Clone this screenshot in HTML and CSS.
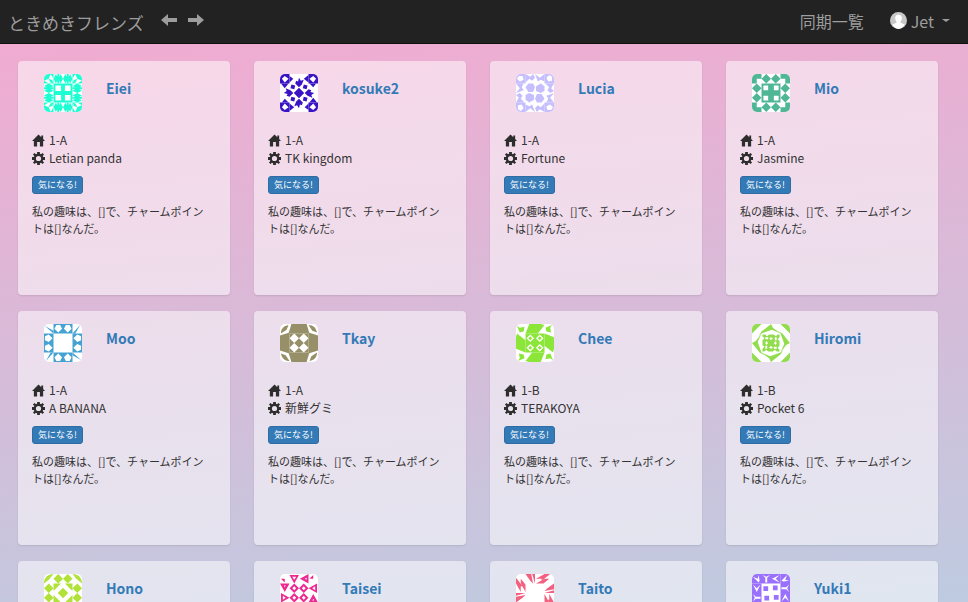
FILE: index.html
```html
<!DOCTYPE html>
<html lang="ja">
<head>
<meta charset="utf-8">
<meta name="viewport" content="width=device-width, initial-scale=1">
<title>ときめきフレンズ</title>
<link rel="stylesheet" href="styles.css">
</head>
<body>
<svg class="sprite" aria-hidden="true">
  <symbol id="home" viewBox="0 0 14 13"><path d="M7 0 0 7h2v6h3.500V8h3v5H12V7h2l-2-2V1h-2v2z"/></symbol>
  <symbol id="cog" viewBox="0 0 14 14"><path fill-rule="evenodd" d="M5.500 0h3v2l1.300.5L11.200 1 13 2.800 11.500 4.200l.5 1.300h2v3h-2l-.5 1.300 1.500 1.400-1.800 1.800-1.400-1.500-1.300.5v2h-3v-2l-1.300-.5L2.800 13 1 11.200l1.500-1.400L2 8.500H0v-3h2l.5-1.300L1 2.800 2.800 1l1.400 1.500L5.500 2zM7 4.200a2.800 2.800 0 1 0 0 5.600 2.800 2.800 0 0 0 0-5.600z"/></symbol>
  <symbol id="arrow" viewBox="0 0 16 14"><path d="M0 7 7 1v4h9v4H7v4z"/></symbol>
</svg>

<header class="navbar">
  <a class="brand" href="#">ときめきフレンズ</a>
  <nav class="history">
    <a href="#" aria-label="戻る"><svg class="arrow"><use href="#arrow"/></svg></a>
    <a href="#" aria-label="進む"><svg class="arrow arrow-next"><use href="#arrow"/></svg></a>
  </nav>
  <nav class="account">
    <a href="#">同期一覧</a>
    <a class="user" href="#">
      <svg class="face" viewBox="0 0 18 18"><circle cx="9" cy="9" r="9" fill="#c8c8c8"/><path fill="#fff" d="M9 3c2.500 0 3.700 1.700 3.500 4-.1 1.500-.7 2.500-1.300 3.200v1.300l4.300 1.800A9 9 0 0 1 9 18a9 9 0 0 1-6.500-4.700l4.300-1.800v-1.300C6.200 9.500 5.600 8.500 5.500 7 5.300 4.700 6.500 3 9 3z"/></svg>
      <span>Jet</span><span class="caret"></span>
    </a>
  </nav>
</header>

<main class="cards">
  <article class="card">
    <header class="card-head">
      <svg class="avatar" viewBox="0 0 40 40" fill="#1dffd2"><g id="a1"><path fill-rule="evenodd" d="M0 0H10V10H0zM7 0 5 5l2 5 3-5zM0 7l5-2 5 2-5 3z"/><path d="M12.500 0 15 5l-2.500 5L10 5zM17.500 0 20 5l-2.500 5L15 5zM22.500 0 25 5l-2.500 5L20 5zM27.500 0 30 5l-2.500 5L25 5zM14 0h2v10h-2zM24 0h2v10h-2z"/><path fill-rule="evenodd" d="M10 10H20V20H10zM12 12v6h6v-6z"/></g><use href="#a1" transform="rotate(90 20 20)"/><use href="#a1" transform="rotate(180 20 20)"/><use href="#a1" transform="rotate(270 20 20)"/></svg>
      <h2><a href="#">Eiei</a></h2>
    </header>
    <ul class="facts"><li><svg><use href="#home"/></svg>1-A</li><li><svg><use href="#cog"/></svg>Letian panda</li></ul>
    <button class="like" type="button">気になる!</button>
    <p>私の趣味は、[]で、チャームポイントは[]なんだ。</p>
  </article>

  <article class="card">
    <header class="card-head">
      <svg class="avatar" viewBox="0 0 40 40" fill="#3a14c4"><g id="a2"><path fill-rule="evenodd" d="M0 0H10V10H0zM5 2 2 5l3 4 4-4z"/><path d="M10 2l4 3-4 4zM30 1v8l-5-4zM20 4l2 3 3-1-2 5-3 3-4-4 1-3 2 1zM12 11l4 1-1 4-4-1zM20 15l5 5-5 5-5-5z"/></g><use href="#a2" transform="rotate(90 20 20)"/><use href="#a2" transform="rotate(180 20 20)"/><use href="#a2" transform="rotate(270 20 20)"/></svg>
      <h2><a href="#">kosuke2</a></h2>
    </header>
    <ul class="facts"><li><svg><use href="#home"/></svg>1-A</li><li><svg><use href="#cog"/></svg>TK kingdom</li></ul>
    <button class="like" type="button">気になる!</button>
    <p>私の趣味は、[]で、チャームポイントは[]なんだ。</p>
  </article>

  <article class="card">
    <header class="card-head">
      <svg class="avatar" viewBox="0 0 40 40" fill="#c6bfff"><g id="a3"><path fill-rule="evenodd" d="M0 0H10V10H0zM3 2 1 5l3 3 4-2-1-4z"/><path d="M10 0l5 3 3-3 2 4-3 3-3-2-4 4zM20 0l5 4 5-4v8l-4-2-3 2zM13 10h5l2 4-2 5h-5l-3-5z"/></g><use href="#a3" transform="rotate(90 20 20)"/><use href="#a3" transform="rotate(180 20 20)"/><use href="#a3" transform="rotate(270 20 20)"/></svg>
      <h2><a href="#">Lucia</a></h2>
    </header>
    <ul class="facts"><li><svg><use href="#home"/></svg>1-A</li><li><svg><use href="#cog"/></svg>Fortune</li></ul>
    <button class="like" type="button">気になる!</button>
    <p>私の趣味は、[]で、チャームポイントは[]なんだ。</p>
  </article>

  <article class="card">
    <header class="card-head">
      <svg class="avatar" viewBox="0 0 40 40" fill="#4fb795"><g id="a4"><path d="M0 0H10V5H5V10H0zM15 0l5 5-5 5-5-5zM25 0l5 5-5 5-5-5z"/><path fill-rule="evenodd" d="M10 10H20V20H10zM12 12v5h5v-5z"/></g><use href="#a4" transform="rotate(90 20 20)"/><use href="#a4" transform="rotate(180 20 20)"/><use href="#a4" transform="rotate(270 20 20)"/></svg>
      <h2><a href="#">Mio</a></h2>
    </header>
    <ul class="facts"><li><svg><use href="#home"/></svg>1-A</li><li><svg><use href="#cog"/></svg>Jasmine</li></ul>
    <button class="like" type="button">気になる!</button>
    <p>私の趣味は、[]で、チャームポイントは[]なんだ。</p>
  </article>

  <article class="card">
    <header class="card-head">
      <svg class="avatar" viewBox="0 0 40 40" fill="#45a3d3"><g id="a5"><path d="M1 2l9 5v3z"/><path fill-rule="evenodd" d="M10 0H30V10H10zM13 1l-2 4 4 4 4-4-2-4zM23 1l-2 4 4 4 4-4-2-4z"/></g><use href="#a5" transform="rotate(90 20 20)"/><use href="#a5" transform="rotate(180 20 20)"/><use href="#a5" transform="rotate(270 20 20)"/></svg>
      <h2><a href="#">Moo</a></h2>
    </header>
    <ul class="facts"><li><svg><use href="#home"/></svg>1-A</li><li><svg><use href="#cog"/></svg>A BANANA</li></ul>
    <button class="like" type="button">気になる!</button>
    <p>私の趣味は、[]で、チャームポイントは[]なんだ。</p>
  </article>

  <article class="card">
    <header class="card-head">
      <svg class="avatar" viewBox="0 0 40 40" fill="#968f68"><g id="a6"><path d="M1 10C1 5 4 2 9 1L7 6zM12 0H28L31 10H9z"/><path fill-rule="evenodd" d="M10 10H20V20H10zM15 10l-5 5 5 5 5-5z"/></g><use href="#a6" transform="rotate(90 20 20)"/><use href="#a6" transform="rotate(180 20 20)"/><use href="#a6" transform="rotate(270 20 20)"/></svg>
      <h2><a href="#">Tkay</a></h2>
    </header>
    <ul class="facts"><li><svg><use href="#home"/></svg>1-A</li><li><svg><use href="#cog"/></svg>新鮮グミ</li></ul>
    <button class="like" type="button">気になる!</button>
    <p>私の趣味は、[]で、チャームポイントは[]なんだ。</p>
  </article>

  <article class="card">
    <header class="card-head">
      <svg class="avatar" viewBox="0 0 40 40" fill="#8ce63a"><g id="a7"><path d="M1 2l3 2 5-1-1 5-4 1zM14 0H26l4 1-7 9H10z"/><path fill-rule="evenodd" d="M10 10H20V20H10zM15 11l-4 4 4 4 4-4zM15 13l2 2-2 2-2-2z"/></g><use href="#a7" transform="rotate(90 20 20)"/><use href="#a7" transform="rotate(180 20 20)"/><use href="#a7" transform="rotate(270 20 20)"/></svg>
      <h2><a href="#">Chee</a></h2>
    </header>
    <ul class="facts"><li><svg><use href="#home"/></svg>1-B</li><li><svg><use href="#cog"/></svg>TERAKOYA</li></ul>
    <button class="like" type="button">気になる!</button>
    <p>私の趣味は、[]で、チャームポイントは[]なんだ。</p>
  </article>

  <article class="card">
    <header class="card-head">
      <svg class="avatar" viewBox="0 0 40 40" fill="#92dd4e"><g id="a8"><path d="M0 0H10L0 10zM20 0l2 4 8 6-9-4-11 4-3 3 3-5z"/><path d="M11 11h3l2 2 2-2h2v3l-2 1 2 2v3h-3l-2-2-1 2h-3v-3l2-2-2-2zM14 14v2h3v-2z" fill-rule="evenodd"/></g><use href="#a8" transform="rotate(90 20 20)"/><use href="#a8" transform="rotate(180 20 20)"/><use href="#a8" transform="rotate(270 20 20)"/></svg>
      <h2><a href="#">Hiromi</a></h2>
    </header>
    <ul class="facts"><li><svg><use href="#home"/></svg>1-B</li><li><svg><use href="#cog"/></svg>Pocket 6</li></ul>
    <button class="like" type="button">気になる!</button>
    <p>私の趣味は、[]で、チャームポイントは[]なんだ。</p>
  </article>

  <article class="card">
    <header class="card-head">
      <svg class="avatar" viewBox="0 0 40 40" fill="#b1e23a"><g id="a9"><path d="M0 10C0 4 4 0 10 0L5 6zM15 0l5 5-5 5-5-5zM25 0l5 5-5 5-5-5zM10 10h8l-8 8zM20 15l5 5-5 5-5-5z"/></g><use href="#a9" transform="rotate(90 20 20)"/><use href="#a9" transform="rotate(180 20 20)"/><use href="#a9" transform="rotate(270 20 20)"/></svg>
      <h2><a href="#">Hono</a></h2>
    </header>
  </article>

  <article class="card">
    <header class="card-head">
      <svg class="avatar" viewBox="0 0 40 40" fill="#ee2a92"><g id="a10"><path fill-rule="evenodd" d="M1 5h4v4zM10 1H20L15 10zM13 3l2 3 2-3zM30 0v10l-9-5zM28 4l-2 1 2 1zM15 10l5 5-5 5-5-5zM15 13l-2 2 2 2 2-2z"/></g><use href="#a10" transform="rotate(90 20 20)"/><use href="#a10" transform="rotate(180 20 20)"/><use href="#a10" transform="rotate(270 20 20)"/></svg>
      <h2><a href="#">Taisei</a></h2>
    </header>
  </article>

  <article class="card">
    <header class="card-head">
      <svg class="avatar" viewBox="0 0 40 40" fill="#f4607f"><g id="a11"><path d="M0 4l7 9H4L0 9zM10 0h6l2 10-3-3zM17 0h3v10zM21 5l9-5h5l-7 5zM21 10l9-5h5l-6 5z"/></g><use href="#a11" transform="rotate(90 20 20)"/><use href="#a11" transform="rotate(180 20 20)"/><use href="#a11" transform="rotate(270 20 20)"/></svg>
      <h2><a href="#">Taito</a></h2>
    </header>
  </article>

  <article class="card">
    <header class="card-head">
      <svg class="avatar" viewBox="0 0 40 40" fill="#9a70ff"><g id="a12"><path fill-rule="evenodd" d="M0 0H30V10H0zM1 3l5 2 1-4 1 6-1 2zM11 1l3 3v5h2V4l3-3-4 2zM29 1l-8 4 8 4-4-4zM12 13h5v5h-5z"/></g><use href="#a12" transform="rotate(90 20 20)"/><use href="#a12" transform="rotate(180 20 20)"/><use href="#a12" transform="rotate(270 20 20)"/></svg>
      <h2><a href="#">Yuki1</a></h2>
    </header>
  </article>
</main>
</body>
</html>
```
FILE: styles.css
```css
* {
  box-sizing: border-box;
}

body {
  margin: 0;
  min-height: 100vh;
  background: linear-gradient(175deg, #f4a9d0, #becbe0) fixed;
  color: #333;
  font: 11px/17px "Noto Sans CJK JP", sans-serif;
}

a {
  text-decoration: none;
}

.sprite {
  display: none;
}

.navbar {
  display: flex;
  align-items: center;
  height: 44px;
  padding: 0 18px 0 8px;
  background: #222;
  border-bottom: 1px solid #101010;
  font-size: 16px;
  line-height: 24px;
}

.navbar a {
  color: #9d9d9d;
}

.navbar .brand {
  padding-top: 2px;
  font-size: 17px;
}

.history {
  display: flex;
  gap: 11px;
  margin-left: 17px;
  padding-bottom: 4px;
}

.arrow {
  display: block;
  width: 16px;
  height: 14px;
  fill: #9d9d9d;
}

.arrow-next {
  transform: scaleX(-1);
}

.account {
  display: flex;
  align-items: center;
  gap: 26px;
  margin-left: auto;
  padding-bottom: 2px;
}

.user {
  display: flex;
  align-items: center;
  gap: 4px;
}

.face {
  width: 17px;
  height: 17px;
}

.caret {
  margin-left: 4px;
  border: 4px solid transparent;
  border-top: 3px solid #9d9d9d;
  border-bottom: 0;
}

.cards {
  display: grid;
  grid-template-columns: repeat(4, 1fr);
  gap: 16px 24px;
  padding: 17px 30px 17px 18px;
}

.card {
  min-height: 234px;
  padding: 13px 14px;
  background: rgba(255, 255, 255, 0.52);
  border-radius: 4px;
  box-shadow: 0 1px 2px rgba(0, 0, 0, 0.1);
}

.card-head {
  display: flex;
  gap: 24px;
  padding-left: 12px;
}

.avatar {
  width: 38px;
  height: 38px;
  background: #fff;
  border-radius: 5px;
}

h2 {
  margin: 3px 0 0;
  font-size: 14px;
  line-height: 22px;
}

h2 a {
  color: #337ab7;
}

.facts {
  margin: 19px 0 0;
  padding: 0;
  list-style: none;
  font-size: 12px;
  line-height: 18px;
}

.facts li {
  display: flex;
  align-items: center;
  gap: 4px;
}

.facts svg {
  width: 13px;
  height: 13px;
  fill: #2d2d2d;
}

.like {
  display: block;
  margin: 9px 0;
  padding: 0 5px;
  border: 1px solid #2e6da4;
  border-radius: 3px;
  background: #337ab7;
  color: #fff;
  font: 9px/16px "Noto Sans CJK JP", sans-serif;
}

.card p {
  margin: 0;
  padding-right: 6px;
}
```
